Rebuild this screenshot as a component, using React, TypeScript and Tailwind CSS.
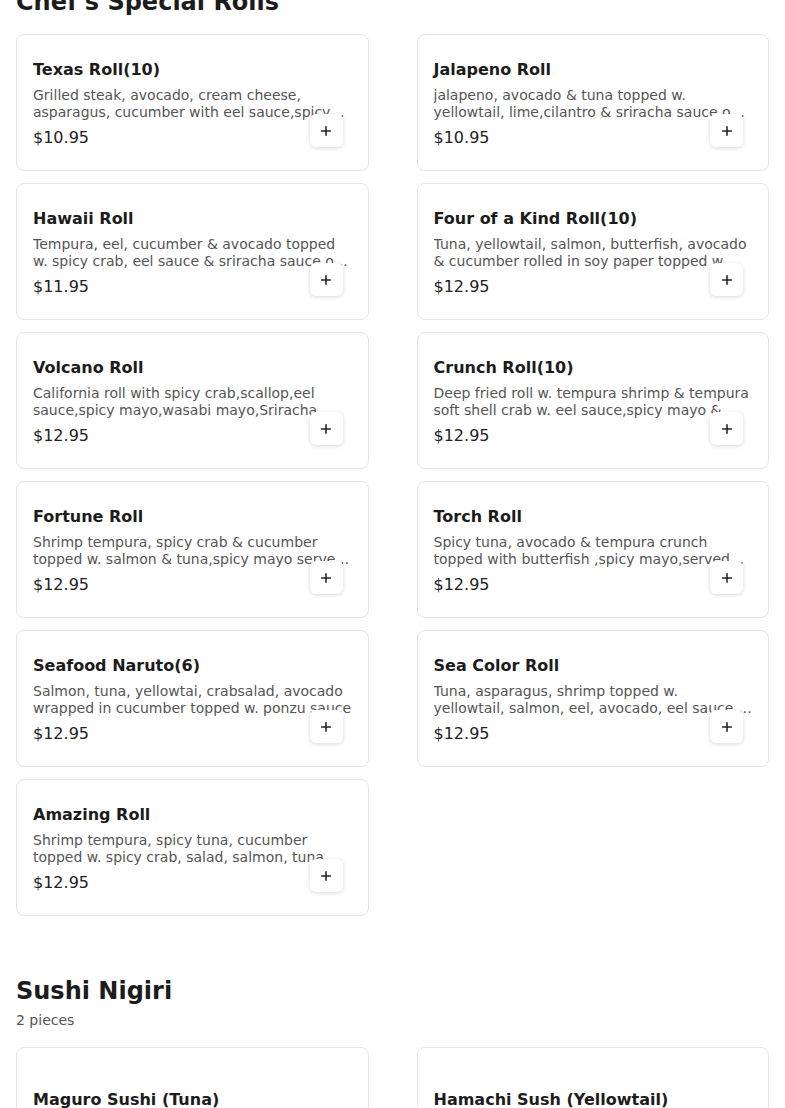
import React from "react";

type Item = { name: string; desc: string; price: string };

const chefs: Item[] = [
  { name: "Texas Roll(10)", desc: "Grilled steak, avocado, cream cheese, asparagus, cucumber with eel sauce,spicy mayo & sesame seeds", price: "$10.95" },
  { name: "Jalapeno Roll", desc: "jalapeno, avocado & tuna topped w. yellowtail, lime,cilantro & sriracha sauce on top", price: "$10.95" },
  { name: "Hawaii Roll", desc: "Tempura, eel, cucumber & avocado topped w. spicy crab, eel sauce & sriracha sauce on top", price: "$11.95" },
  { name: "Four of a Kind Roll(10)", desc: "Tuna, yellowtail, salmon, butterfish, avocado & cucumber rolled in soy paper topped w. eel sauce", price: "$12.95" },
  { name: "Volcano Roll", desc: "California roll with spicy crab,scallop,eel sauce,spicy mayo,wasabi mayo,Sriracha sauce", price: "$12.95" },
  { name: "Crunch Roll(10)", desc: "Deep fried roll w. tempura shrimp & tempura soft shell crab w. eel sauce,spicy mayo & crunch", price: "$12.95" },
  { name: "Fortune Roll", desc: "Shrimp tempura, spicy crab & cucumber topped w. salmon & tuna,spicy mayo served with eel sauce", price: "$12.95" },
  { name: "Torch Roll", desc: "Spicy tuna, avocado & tempura crunch topped with butterfish ,spicy mayo,served with eel sauce", price: "$12.95" },
  { name: "Seafood Naruto(6)", desc: "Salmon, tuna, yellowtai, crabsalad, avocado wrapped in cucumber topped w. ponzu sauce", price: "$12.95" },
  { name: "Sea Color Roll", desc: "Tuna, asparagus, shrimp topped w. yellowtail, salmon, eel, avocado, eel sauce, spicy mayo", price: "$12.95" },
  { name: "Amazing Roll", desc: "Shrimp tempura, spicy tuna, cucumber topped w. spicy crab, salad, salmon, tuna, eel sauce", price: "$12.95" },
];

const nigiri: Item[] = [
  { name: "Maguro Sushi (Tuna)", desc: "", price: "$6.95" },
  { name: "Hamachi Sush (Yellowtail)", desc: "", price: "$6.95" },
];

function PlusIcon() {
  return (
    <svg width="16" height="16" viewBox="0 0 24 24" fill="none" stroke="#1f1f1f" strokeWidth="2.3" strokeLinecap="round">
      <path d="M5.5 12h13" />
      <path d="M12 5.5v13" />
    </svg>
  );
}

function Card({ item }: { item: Item }) {
  return (
    <div className="relative h-[137px] rounded-lg border border-[#e4e4e4] bg-white px-4 pt-[2px] flex flex-col justify-center">
      <div className="text-[16px] leading-[24px] font-bold text-[#1c1c1c]">{item.name}</div>
      <div className="mt-[5px] mb-1 text-[14px] leading-[17.5px] text-[#555555] line-clamp-2">{item.desc}</div>
      <div className="text-[16px] leading-[24px] text-[#222222]">{item.price}</div>
      <button className="absolute right-[25px] bottom-[23px] w-[33px] h-[33px] rounded-md bg-white flex items-center justify-center shadow-[0_1px_4px_rgba(0,0,0,0.16)]">
        <PlusIcon />
      </button>
    </div>
  );
}

function Section({ title, subtitle, items }: { title: string; subtitle?: string; items: Item[] }) {
  return (
    <section>
      <h2 className="text-[24px] leading-[32px] font-bold text-[#1c1c1c]">{title}</h2>
      {subtitle && <p className="mt-[3px] text-[14px] leading-[20px] text-[#555555]">{subtitle}</p>}
      <div className={subtitle ? "mt-[17px] grid grid-cols-2 gap-x-12 gap-y-3" : "mt-4 grid grid-cols-2 gap-x-12 gap-y-3"}>
        {items.map((it) => (
          <Card key={it.name} item={it} />
        ))}
      </div>
    </section>
  );
}

export default function App() {
  return (
    <div className="min-h-screen bg-white font-['DejaVu_Sans',sans-serif] px-4 overflow-hidden">
      <div className="-mt-[14px]">
        <Section title="Chef's Special Rolls" items={chefs} />
        <div className="mt-[59px]">
          <Section title="Sushi Nigiri" subtitle="2 pieces" items={nigiri} />
        </div>
      </div>
    </div>
  );
}
